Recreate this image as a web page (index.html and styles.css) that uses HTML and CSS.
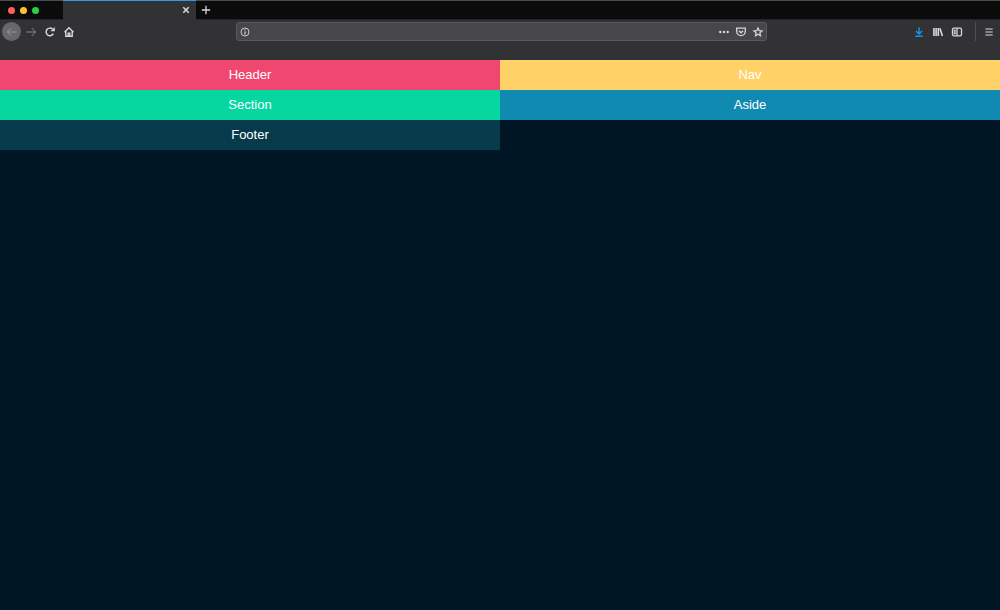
FILE: index.html
```
<!DOCTYPE html>
<html lang="en">
<head>
<meta charset="utf-8">
<title>Grid layout</title>
<link rel="stylesheet" href="styles.css">
</head>
<body>
<div class="browser">
  <div class="tabbar">
    <div class="lights">
      <button class="light close" aria-label="Close window"></button>
      <button class="light minimize" aria-label="Minimize window"></button>
      <button class="light expand" aria-label="Expand window"></button>
    </div>
    <div class="tab">
      <button class="icon tab-icon" aria-label="Close tab"><svg width="8" height="8" viewBox="0 0 8 8" stroke-width="1.6"><path d="M1.3 1.3l5.4 5.4M6.7 1.3L1.3 6.7"/></svg></button>
    </div>
    <button class="icon tab-icon" aria-label="New tab"><svg width="10" height="10" viewBox="0 0 10 10" stroke-width="1.3"><path d="M5 .8v8.4M.8 5h8.4"/></svg></button>
  </div>
  <div class="toolbar">
    <div class="group">
      <button class="icon back" aria-label="Back"><svg width="12" height="12" viewBox="0 0 12 12"><path d="M10.7 6H1.5M5.3 2L1.3 6l4 4"/></svg></button>
      <button class="icon dim" aria-label="Forward"><svg width="12" height="12" viewBox="0 0 12 12"><path d="M1.3 6h9.2M6.7 2l4 4-4 4"/></svg></button>
      <button class="icon" aria-label="Reload"><svg width="12" height="12" viewBox="0 0 12 12" stroke-width="1.5"><path d="M9.3 7.7A3.8 3.8 0 1 1 8.6 3.2"/><path d="M10.8 1v4.3H6.5z" fill="currentColor" stroke="none"/></svg></button>
      <button class="icon" aria-label="Home"><svg width="12" height="12" viewBox="0 0 12 12" stroke-width="1.4"><path d="M1.5 6.3L6 1.8l4.5 4.5M2.8 5.5v4.8h6.4V5.5"/><path d="M5.2 10.3V7.2h1.6v3.1"/></svg></button>
    </div>
    <div class="address">
      <svg width="10" height="10" viewBox="0 0 10 10" stroke-width="0.9"><circle cx="5" cy="5" r="4"/><path d="M5 4.5v3M5 2.4v1.1" stroke-width="1.2"/></svg>
      <input class="url" type="text" aria-label="Address">
      <button class="icon narrow" aria-label="Page actions"><svg width="12" height="12" viewBox="0 0 12 12"><g fill="currentColor" stroke="none"><circle cx="2.3" cy="6" r="1.2"/><circle cx="6" cy="6" r="1.2"/><circle cx="9.7" cy="6" r="1.2"/></g></svg></button>
      <button class="icon narrow" aria-label="Save to Pocket"><svg width="12" height="12" viewBox="0 0 12 12" stroke-width="1.3"><path d="M1.7 2.1h8.6v3.2a4.3 4.3 0 0 1-8.6 0z"/><path d="M3.9 4.8L6 6.8l2.1-2"/></svg></button>
      <button class="icon narrow" aria-label="Bookmark"><svg width="12" height="12" viewBox="0 0 12 12" stroke-width="1.2"><path d="M6 1.9l1.2 2.7 2.9.3L7.9 6.8l.6 3L6 8.3 3.5 9.8l.6-3L1.9 4.9l2.9-.3z"/></svg></button>
    </div>
    <div class="group end">
      <button class="icon download" aria-label="Downloads"><svg width="12" height="12" viewBox="0 0 12 12" stroke-width="1.4"><path d="M6 1.2v6.6M2.9 5l3.1 3.1L9.1 5M2.4 10.2h7.2"/></svg></button>
      <button class="icon" aria-label="Library"><svg width="12" height="12" viewBox="0 0 12 12" stroke-width="1.6"><path d="M1.9 2v8M4.1 2v8M6.3 2v8M7.9 2.2l2.5 7.8"/></svg></button>
      <button class="icon" aria-label="Sidebars"><svg width="12" height="12" viewBox="0 0 12 12" stroke-width="1.3"><rect x="1.5" y="2.2" width="9" height="7.6" rx="1.4"/><path d="M6 2.2v7.6M2.7 4.4h2M2.7 6h2M2.7 7.6h2"/></svg></button>
      <span class="divider"></span>
      <button class="icon narrow" aria-label="Menu"><svg width="12" height="12" viewBox="0 0 12 12" stroke-width="1.2"><path d="M2.3 3h7.4M2.3 6h7.4M2.3 9h7.4"/></svg></button>
    </div>
  </div>
</div>
<div class="page">
  <header class="cell header">Header</header>
  <nav class="cell nav">Nav</nav>
  <section class="cell section">Section</section>
  <aside class="cell aside">Aside</aside>
  <footer class="cell footer">Footer</footer>
</div>
</body>
</html>
```
FILE: styles.css
```
* { box-sizing: border-box; }

body {
  margin: 0;
  min-height: 100vh;
  background: #001624;
  color: #fff;
  font-family: "Liberation Sans", Arial, sans-serif;
}

button {
  border: 0;
  padding: 0;
  background: none;
  color: inherit;
}

svg {
  display: block;
  flex: none;
  fill: none;
  stroke: currentColor;
}

.browser {
  background: #323234;
  color: #d8d8da;
  border-bottom: 1px solid #28323d;
}

.tabbar {
  display: flex;
  height: 20px;
  background: #0b0b0b;
  border-top: 1px solid #4a4c4c;
  border-bottom: 1px solid #252527;
}

.lights {
  display: flex;
  align-items: center;
  gap: 5px;
  width: 63px;
  padding-left: 8px;
}

.light {
  width: 7px;
  height: 7px;
  border-radius: 50%;
}

.close { background: #ff5f57; }
.minimize { background: #ffc02e; }
.expand { background: #28d144; }

.tab {
  display: flex;
  justify-content: flex-end;
  width: 133px;
  height: 20px;
  margin-top: -1px;
  background: #323234;
  border-top: 1px solid #2b9bf0;
}

.icon {
  display: flex;
  align-items: center;
  justify-content: center;
  width: 19px;
  height: 19px;
}

.narrow { width: 17px; }

.tab-icon {
  width: 20px;
  height: 18px;
}

.toolbar {
  display: flex;
  align-items: center;
  padding: 2px 3px 18px 2px;
}

.group {
  display: flex;
  align-items: center;
  flex: 1 1 0;
}

.group .icon { height: 18px; }

.end { justify-content: flex-end; }

.group .back {
  height: 19px;
  border-radius: 50%;
  background: #68686a;
  color: #98989a;
}

.dim { color: #88888a; }
.download { color: #1496f0; }

.address {
  display: flex;
  align-items: center;
  flex: 0 0 auto;
  width: 53.4%;
  height: 19px;
  padding: 0 0 0 3px;
  background: #474749;
  border: 1px solid #5a5a5c;
  border-radius: 3px;
}

.url {
  flex: 1;
  min-width: 0;
  height: 17px;
  border: 0;
  padding: 0 4px;
  background: none;
  color: inherit;
  font: 12px "Liberation Sans", Arial, sans-serif;
}

.group:first-child { flex-grow: 234; }
.group:last-child { flex-grow: 230; }

.divider {
  width: 1px;
  height: 19px;
  margin: 0 4px 0 9px;
  background: #505052;
}

.page {
  display: grid;
  grid-template-columns: 1fr 1fr;
}

.cell {
  padding: 6px;
  font-size: 13px;
  line-height: 18px;
  text-align: center;
}

.header { background: #ef476f; }
.nav { background: #ffd166; }
.section { background: #06d6a0; }
.aside { background: #118ab2; }
.footer { background: #073b4c; }
```
